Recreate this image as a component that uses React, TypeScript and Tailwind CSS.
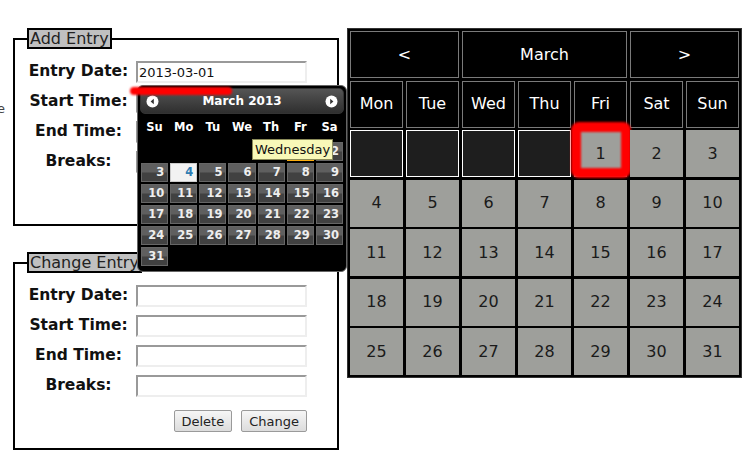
import { ReactNode } from 'react';

const font = "font-['DejaVu_Sans',Verdana,sans-serif]";

const smallWeeks: (number | null)[][] = [
  [null, null, null, null, null, 1, 2],
  [3, 4, 5, 6, 7, 8, 9],
  [10, 11, 12, 13, 14, 15, 16],
  [17, 18, 19, 20, 21, 22, 23],
  [24, 25, 26, 27, 28, 29, 30],
  [31, null, null, null, null, null, null],
];

const bigWeeks: (number | null)[][] = [
  [null, null, null, null, 1, 2, 3],
  [4, 5, 6, 7, 8, 9, 10],
  [11, 12, 13, 14, 15, 16, 17],
  [18, 19, 20, 21, 22, 23, 24],
  [25, 26, 27, 28, 29, 30, 31],
];

function Field({ label, value }: { label: string; value?: string }) {
  return (
    <div className="flex h-[30px] items-center">
      <label className="w-[103px] text-center text-[15.5px] font-bold text-[#111]">{label}</label>
      <input
        readOnly
        value={value ?? ''}
        className="ml-[6px] h-[22px] w-[171px] border-2 border-t-[#999] border-l-[#999] border-r-[#eee] border-b-[#eee] bg-white px-[1px] text-[13px] text-[#111] outline-none"
      />
    </div>
  );
}

function Btn({ children }: { children: ReactNode }) {
  return (
    <button className="h-[22px] rounded-[2px] border border-[#9a9a9a] bg-gradient-to-b from-[#f6f6f6] to-[#dcdcdc] px-[7px] text-[13px] leading-none text-[#222]">
      {children}
    </button>
  );
}

function EntryBox({ title, value, buttons }: { title: string; value?: string; buttons: ReactNode }) {
  return (
    <fieldset className="w-[326px] border-2 border-black px-[12px] pt-[8px] pb-[16px]">
      <legend className="border-2 border-black bg-[#c0c0c0] px-[1px] text-[16px] leading-[17px] text-[#222]">
        {title}
      </legend>
      <Field label="Entry Date:" value={value} />
      <Field label="Start Time:" />
      <Field label="End Time:" />
      <Field label="Breaks:" />
      <div className="mt-[9px] flex w-[280px] justify-end gap-[9px]">{buttons}</div>
    </fieldset>
  );
}

function NavCircle({ dir }: { dir: 'w' | 'e' }) {
  return (
    <svg width="13" height="13" viewBox="0 0 13 13">
      <circle cx="6.5" cy="6.5" r="6" fill="#fff" />
      {dir === 'w' ? (
        <path d="M7.8 3.8 L4.6 6.5 L7.8 9.2 Z" fill="#333" />
      ) : (
        <path d="M5.2 3.8 L8.4 6.5 L5.2 9.2 Z" fill="#333" />
      )}
    </svg>
  );
}

function DatePicker() {
  return (
    <div className="absolute left-[137px] top-[85px] w-[210px] rounded-[6px] border border-[#666] bg-black p-[2px] text-white">
      <div className="flex h-[26px] items-center justify-between rounded-[5px] border border-[#333] bg-gradient-to-b from-[#555] to-[#2f2f2f] px-[5px]">
        <NavCircle dir="w" />
        <span className="text-[12px] font-bold">March 2013</span>
        <NavCircle dir="e" />
      </div>
      <div className="grid grid-cols-7 gap-x-[2px] px-[1px]">
        {['Su', 'Mo', 'Tu', 'We', 'Th', 'Fr', 'Sa'].map((d) => (
          <div key={d} className="flex h-[28px] items-center justify-center text-[11.5px] font-bold">
            {d}
          </div>
        ))}
      </div>
      <div className="grid grid-cols-7 gap-[2px] px-[1px] pb-[3px]">
        {smallWeeks.flat().map((n, i) => {
          if (n === null) return <div key={i} className="h-[19px]" />;
          let cls = 'border-[#666] bg-gradient-to-b from-[#5f5f5f] from-45% to-[#414141] to-55% text-[#eee]';
          if (n === 4) cls = 'border-[#ccc] bg-[#f2f2f2] text-[#2e7db2]';
          if (n === 1) cls = 'border-[#ffaf0f] bg-[#f5a000] text-white';
          return (
            <div
              key={i}
              className={`flex h-[19px] items-center justify-end border pr-[3px] text-[11.5px] font-bold ${cls}`}
            >
              {n}
            </div>
          );
        })}
      </div>
      <div className="absolute left-[114px] top-[53px] flex h-[21px] items-center border border-[#8c8c5a] bg-[#f8f8b8] px-[2px] text-[13px] text-[#111]">
        Wednesday
      </div>
    </div>
  );
}

function BigCalendar() {
  const head = 'flex h-[47px] items-center justify-center border border-[#7a7a7a] bg-black text-[16px] text-white';
  return (
    <div className="grid w-[395px] grid-cols-7 gap-x-[3px] gap-y-[2.5px] border border-[#333] bg-black p-[2px]">
      <div className={`${head} col-span-2`}>&lt;</div>
      <div className={`${head} col-span-3`}>March</div>
      <div className={`${head} col-span-2`}>&gt;</div>
      {['Mon', 'Tue', 'Wed', 'Thu', 'Fri', 'Sat', 'Sun'].map((d) => (
        <div key={d} className={head}>
          {d}
        </div>
      ))}
      {bigWeeks.flat().map((n, i) =>
        n === null ? (
          <div key={i} className="h-[47px] border border-white bg-[#1e1e1e]" />
        ) : (
          <div
            key={i}
            className="relative flex h-[47px] items-center justify-center bg-[#9e9f9b] text-[16px] text-[#1a1a1a]"
          >
            {n}
            {n === 1 && (
              <div className="absolute -left-[3px] -top-[8px] h-[56px] w-[60px] rounded-[8px] border-[10px] border-[#ff0000] blur-[1px]" />
            )}
          </div>
        ),
      )}
    </div>
  );
}

export default function App() {
  return (
    <div className={`relative h-[475px] w-[750px] overflow-hidden bg-white ${font}`}>
      <span className="absolute -left-[3px] top-[101px] text-[13px] leading-[15px] text-[#444]">e</span>
      <div className="flex items-start gap-[8px] pl-[13px] pt-[28px]">
        <div className="flex flex-col">
          <EntryBox title="Add Entry" value="2013-03-01" buttons={<Btn>Add</Btn>} />
          <div className="mt-[26px]">
            <EntryBox
              title="Change Entry"
              buttons={
                <>
                  <Btn>Delete</Btn>
                  <Btn>Change</Btn>
                </>
              }
            />
          </div>
        </div>
        <BigCalendar />
      </div>
      <DatePicker />
      <div className="absolute left-[130px] top-[87px] h-[8px] w-[102px] rounded-full bg-[#ff0000] blur-[1px]" />
    </div>
  );
}
